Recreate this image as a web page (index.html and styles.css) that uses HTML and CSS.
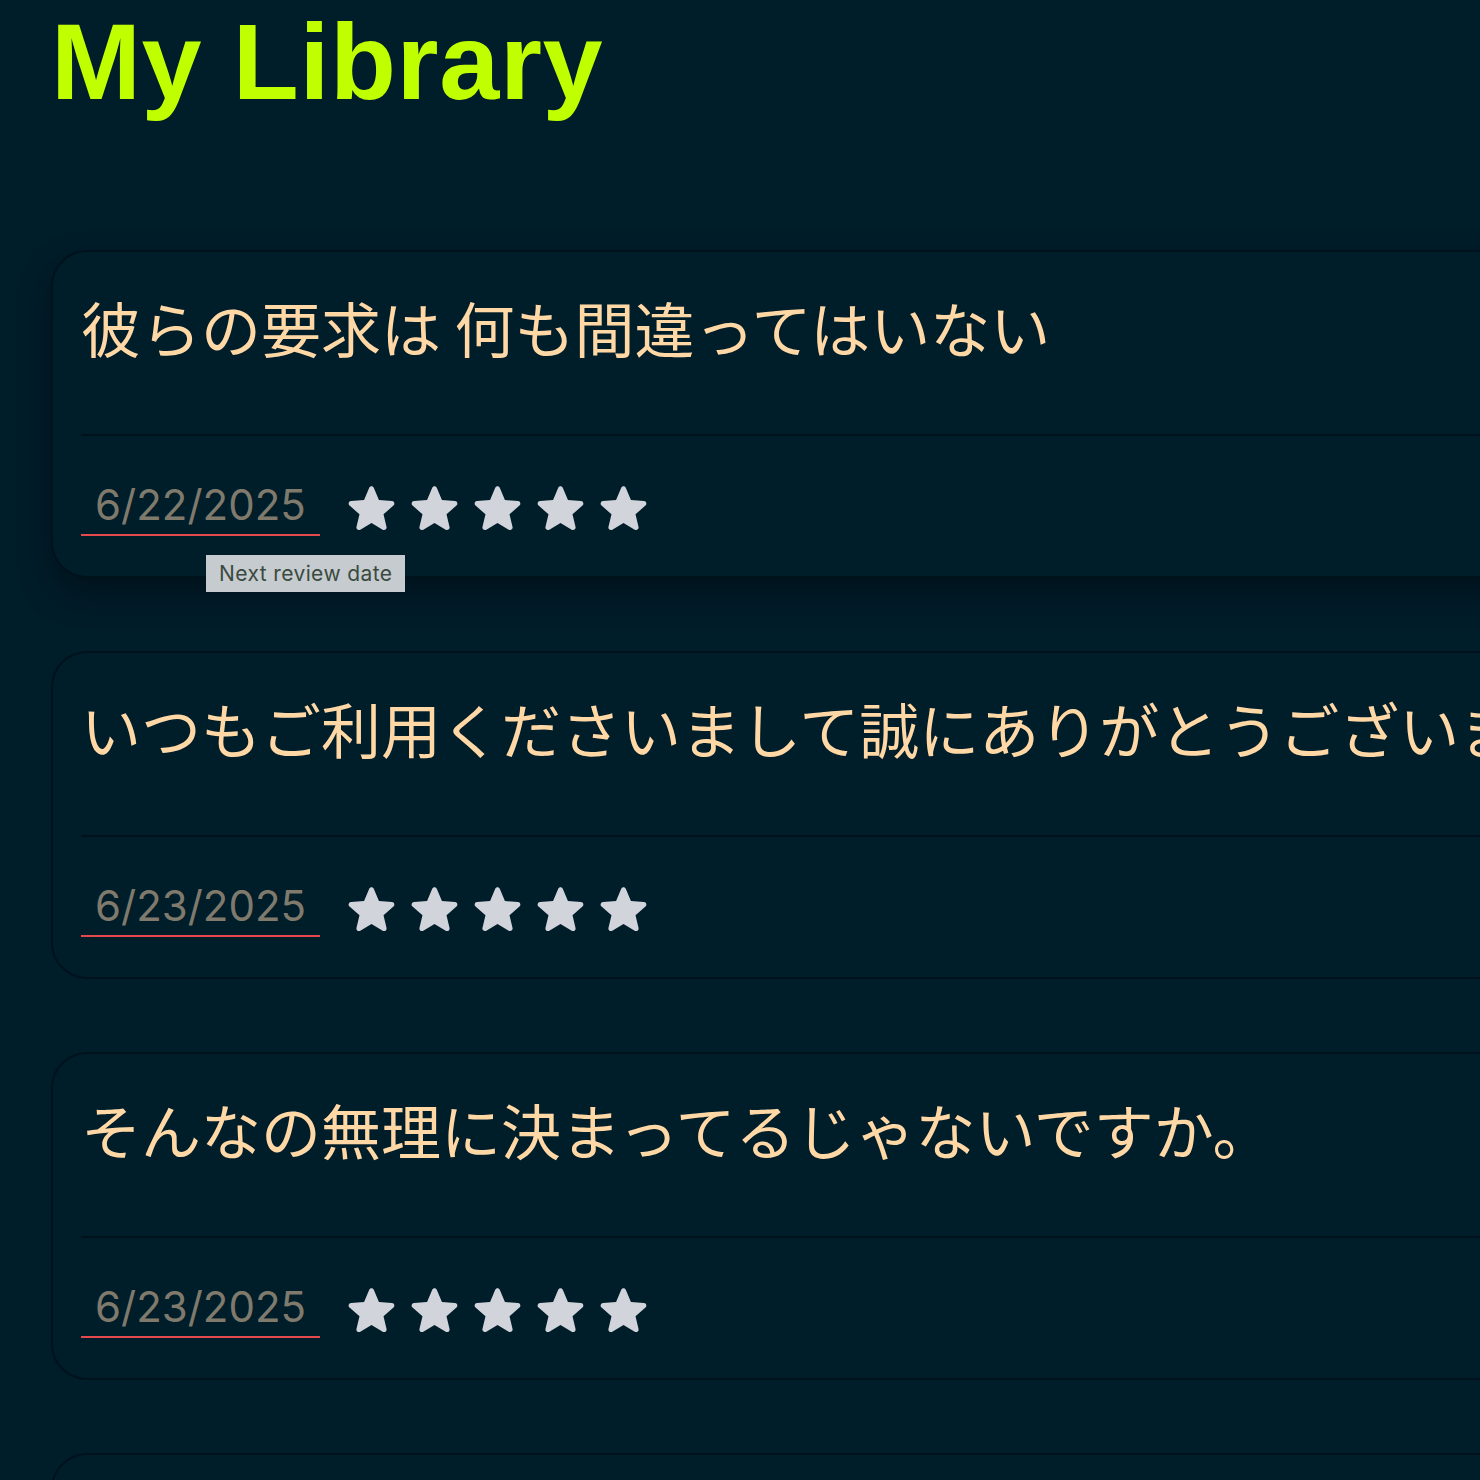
FILE: index.html
```html
<!DOCTYPE html>
<html lang="ja">
<head>
<meta charset="utf-8">
<title>My Library</title>
<link rel="stylesheet" href="styles.css">
</head>
<body>
<main class="page">
  <h1 class="title">My Library</h1>
  <section class="list">
    <article class="card is-hovered">
      <div class="card-head"><h2 class="phrase">彼らの要求は 何も間違ってはいない</h2></div>
      <div class="card-foot">
        <div class="date-wrap">
          <span class="date">6/22/2025</span>
          <span class="tooltip">Next review date</span>
        </div>
        <div class="stars">
          <svg class="star" viewBox="0 0 20 20"><path d="M10.868 2.884c-.321-.772-1.415-.772-1.736 0l-1.83 4.401-4.753.381c-.833.067-1.171 1.107-.536 1.651l3.62 3.102-1.106 4.637c-.194.813.691 1.456 1.405 1.02L10 15.591l4.069 2.485c.713.436 1.598-.207 1.404-1.02l-1.106-4.637 3.62-3.102c.635-.544.297-1.584-.536-1.65l-4.752-.382-1.831-4.401z"/></svg>
          <svg class="star" viewBox="0 0 20 20"><path d="M10.868 2.884c-.321-.772-1.415-.772-1.736 0l-1.83 4.401-4.753.381c-.833.067-1.171 1.107-.536 1.651l3.62 3.102-1.106 4.637c-.194.813.691 1.456 1.405 1.02L10 15.591l4.069 2.485c.713.436 1.598-.207 1.404-1.02l-1.106-4.637 3.62-3.102c.635-.544.297-1.584-.536-1.65l-4.752-.382-1.831-4.401z"/></svg>
          <svg class="star" viewBox="0 0 20 20"><path d="M10.868 2.884c-.321-.772-1.415-.772-1.736 0l-1.83 4.401-4.753.381c-.833.067-1.171 1.107-.536 1.651l3.62 3.102-1.106 4.637c-.194.813.691 1.456 1.405 1.02L10 15.591l4.069 2.485c.713.436 1.598-.207 1.404-1.02l-1.106-4.637 3.62-3.102c.635-.544.297-1.584-.536-1.65l-4.752-.382-1.831-4.401z"/></svg>
          <svg class="star" viewBox="0 0 20 20"><path d="M10.868 2.884c-.321-.772-1.415-.772-1.736 0l-1.83 4.401-4.753.381c-.833.067-1.171 1.107-.536 1.651l3.62 3.102-1.106 4.637c-.194.813.691 1.456 1.405 1.02L10 15.591l4.069 2.485c.713.436 1.598-.207 1.404-1.02l-1.106-4.637 3.62-3.102c.635-.544.297-1.584-.536-1.65l-4.752-.382-1.831-4.401z"/></svg>
          <svg class="star" viewBox="0 0 20 20"><path d="M10.868 2.884c-.321-.772-1.415-.772-1.736 0l-1.83 4.401-4.753.381c-.833.067-1.171 1.107-.536 1.651l3.62 3.102-1.106 4.637c-.194.813.691 1.456 1.405 1.02L10 15.591l4.069 2.485c.713.436 1.598-.207 1.404-1.02l-1.106-4.637 3.62-3.102c.635-.544.297-1.584-.536-1.65l-4.752-.382-1.831-4.401z"/></svg>
        </div>
      </div>
    </article>
    <article class="card">
      <div class="card-head"><h2 class="phrase">いつもご利用くださいまして誠にありがとうございます</h2></div>
      <div class="card-foot">
        <div class="date-wrap"><span class="date">6/23/2025</span></div>
        <div class="stars">
          <svg class="star" viewBox="0 0 20 20"><path d="M10.868 2.884c-.321-.772-1.415-.772-1.736 0l-1.83 4.401-4.753.381c-.833.067-1.171 1.107-.536 1.651l3.62 3.102-1.106 4.637c-.194.813.691 1.456 1.405 1.02L10 15.591l4.069 2.485c.713.436 1.598-.207 1.404-1.02l-1.106-4.637 3.62-3.102c.635-.544.297-1.584-.536-1.65l-4.752-.382-1.831-4.401z"/></svg>
          <svg class="star" viewBox="0 0 20 20"><path d="M10.868 2.884c-.321-.772-1.415-.772-1.736 0l-1.83 4.401-4.753.381c-.833.067-1.171 1.107-.536 1.651l3.62 3.102-1.106 4.637c-.194.813.691 1.456 1.405 1.02L10 15.591l4.069 2.485c.713.436 1.598-.207 1.404-1.02l-1.106-4.637 3.62-3.102c.635-.544.297-1.584-.536-1.65l-4.752-.382-1.831-4.401z"/></svg>
          <svg class="star" viewBox="0 0 20 20"><path d="M10.868 2.884c-.321-.772-1.415-.772-1.736 0l-1.83 4.401-4.753.381c-.833.067-1.171 1.107-.536 1.651l3.62 3.102-1.106 4.637c-.194.813.691 1.456 1.405 1.02L10 15.591l4.069 2.485c.713.436 1.598-.207 1.404-1.02l-1.106-4.637 3.62-3.102c.635-.544.297-1.584-.536-1.65l-4.752-.382-1.831-4.401z"/></svg>
          <svg class="star" viewBox="0 0 20 20"><path d="M10.868 2.884c-.321-.772-1.415-.772-1.736 0l-1.83 4.401-4.753.381c-.833.067-1.171 1.107-.536 1.651l3.62 3.102-1.106 4.637c-.194.813.691 1.456 1.405 1.02L10 15.591l4.069 2.485c.713.436 1.598-.207 1.404-1.02l-1.106-4.637 3.62-3.102c.635-.544.297-1.584-.536-1.65l-4.752-.382-1.831-4.401z"/></svg>
          <svg class="star" viewBox="0 0 20 20"><path d="M10.868 2.884c-.321-.772-1.415-.772-1.736 0l-1.83 4.401-4.753.381c-.833.067-1.171 1.107-.536 1.651l3.62 3.102-1.106 4.637c-.194.813.691 1.456 1.405 1.02L10 15.591l4.069 2.485c.713.436 1.598-.207 1.404-1.02l-1.106-4.637 3.62-3.102c.635-.544.297-1.584-.536-1.65l-4.752-.382-1.831-4.401z"/></svg>
        </div>
      </div>
    </article>
    <article class="card">
      <div class="card-head"><h2 class="phrase">そんなの無理に決まってるじゃないですか。</h2></div>
      <div class="card-foot">
        <div class="date-wrap"><span class="date">6/23/2025</span></div>
        <div class="stars">
          <svg class="star" viewBox="0 0 20 20"><path d="M10.868 2.884c-.321-.772-1.415-.772-1.736 0l-1.83 4.401-4.753.381c-.833.067-1.171 1.107-.536 1.651l3.62 3.102-1.106 4.637c-.194.813.691 1.456 1.405 1.02L10 15.591l4.069 2.485c.713.436 1.598-.207 1.404-1.02l-1.106-4.637 3.62-3.102c.635-.544.297-1.584-.536-1.65l-4.752-.382-1.831-4.401z"/></svg>
          <svg class="star" viewBox="0 0 20 20"><path d="M10.868 2.884c-.321-.772-1.415-.772-1.736 0l-1.83 4.401-4.753.381c-.833.067-1.171 1.107-.536 1.651l3.62 3.102-1.106 4.637c-.194.813.691 1.456 1.405 1.02L10 15.591l4.069 2.485c.713.436 1.598-.207 1.404-1.02l-1.106-4.637 3.62-3.102c.635-.544.297-1.584-.536-1.65l-4.752-.382-1.831-4.401z"/></svg>
          <svg class="star" viewBox="0 0 20 20"><path d="M10.868 2.884c-.321-.772-1.415-.772-1.736 0l-1.83 4.401-4.753.381c-.833.067-1.171 1.107-.536 1.651l3.62 3.102-1.106 4.637c-.194.813.691 1.456 1.405 1.02L10 15.591l4.069 2.485c.713.436 1.598-.207 1.404-1.02l-1.106-4.637 3.62-3.102c.635-.544.297-1.584-.536-1.65l-4.752-.382-1.831-4.401z"/></svg>
          <svg class="star" viewBox="0 0 20 20"><path d="M10.868 2.884c-.321-.772-1.415-.772-1.736 0l-1.83 4.401-4.753.381c-.833.067-1.171 1.107-.536 1.651l3.62 3.102-1.106 4.637c-.194.813.691 1.456 1.405 1.02L10 15.591l4.069 2.485c.713.436 1.598-.207 1.404-1.02l-1.106-4.637 3.62-3.102c.635-.544.297-1.584-.536-1.65l-4.752-.382-1.831-4.401z"/></svg>
          <svg class="star" viewBox="0 0 20 20"><path d="M10.868 2.884c-.321-.772-1.415-.772-1.736 0l-1.83 4.401-4.753.381c-.833.067-1.171 1.107-.536 1.651l3.62 3.102-1.106 4.637c-.194.813.691 1.456 1.405 1.02L10 15.591l4.069 2.485c.713.436 1.598-.207 1.404-1.02l-1.106-4.637 3.62-3.102c.635-.544.297-1.584-.536-1.65l-4.752-.382-1.831-4.401z"/></svg>
        </div>
      </div>
    </article>
    <article class="card">
      <div class="card-head"><h2 class="phrase">&nbsp;</h2></div>
      <div class="card-foot">
        <div class="date-wrap"><span class="date">&nbsp;</span></div>
      </div>
    </article>
  </section>
</main>
</body>
</html>
```
FILE: styles.css
```css
html, body {
  margin: 0;
  padding: 0;
  background: #001d2a;
  overflow: hidden;
}

.page {
  width: 1600px;
  padding: 8px 0 0 51px;
  font-family: Inter, "Noto Sans", sans-serif;
}

.title {
  margin: 0 0 134px 0;
  font-family: "Liberation Sans", Arial, sans-serif;
  font-weight: 700;
  font-size: 108px;
  line-height: 1;
  letter-spacing: 0.6px;
  color: #bfff00;
}

.list {
  display: flex;
  flex-direction: column;
  gap: 73px;
}

.card {
  border: 2px solid #00121b;
  border-radius: 36px;
  background: #001d2a;
  padding: 30px 0 40px 28px;
}

.card.is-hovered {
  box-shadow: 0 16px 30px rgba(0, 10, 16, 0.5);
}

.card-head {
  padding-bottom: 62px;
  border-bottom: 2px solid #00131c;
}

.phrase {
  margin: 0;
  font-family: "Noto Sans CJK JP", "Noto Sans", sans-serif;
  font-weight: 400;
  font-size: 60px;
  line-height: 90px;
  color: #ffd8a6;
  white-space: nowrap;
}

.card-foot {
  display: flex;
  align-items: center;
  gap: 24px;
  padding-top: 36px;
}

.date-wrap {
  position: relative;
}

.date {
  display: block;
  min-width: 208px;
  padding: 9px 14px 5px 14px;
  border-bottom: 2px solid #e5484d;
  font-family: Inter, "Noto Sans", sans-serif;
  font-size: 42px;
  line-height: 48px;
  color: #7f7a6c;
}

.tooltip {
  position: absolute;
  left: 125px;
  top: 83px;
  padding: 0 13px;
  height: 37px;
  line-height: 37px;
  background: #c5cbce;
  color: #3b4a40;
  font-family: Inter, "Noto Sans", sans-serif;
  font-size: 21px;
  letter-spacing: 0.4px;
  white-space: nowrap;
}

.stars {
  display: flex;
  gap: 8px;
  margin-top: 6px;
}

.star {
  width: 55px;
  height: 55px;
  fill: #d1d5db;
}
```
